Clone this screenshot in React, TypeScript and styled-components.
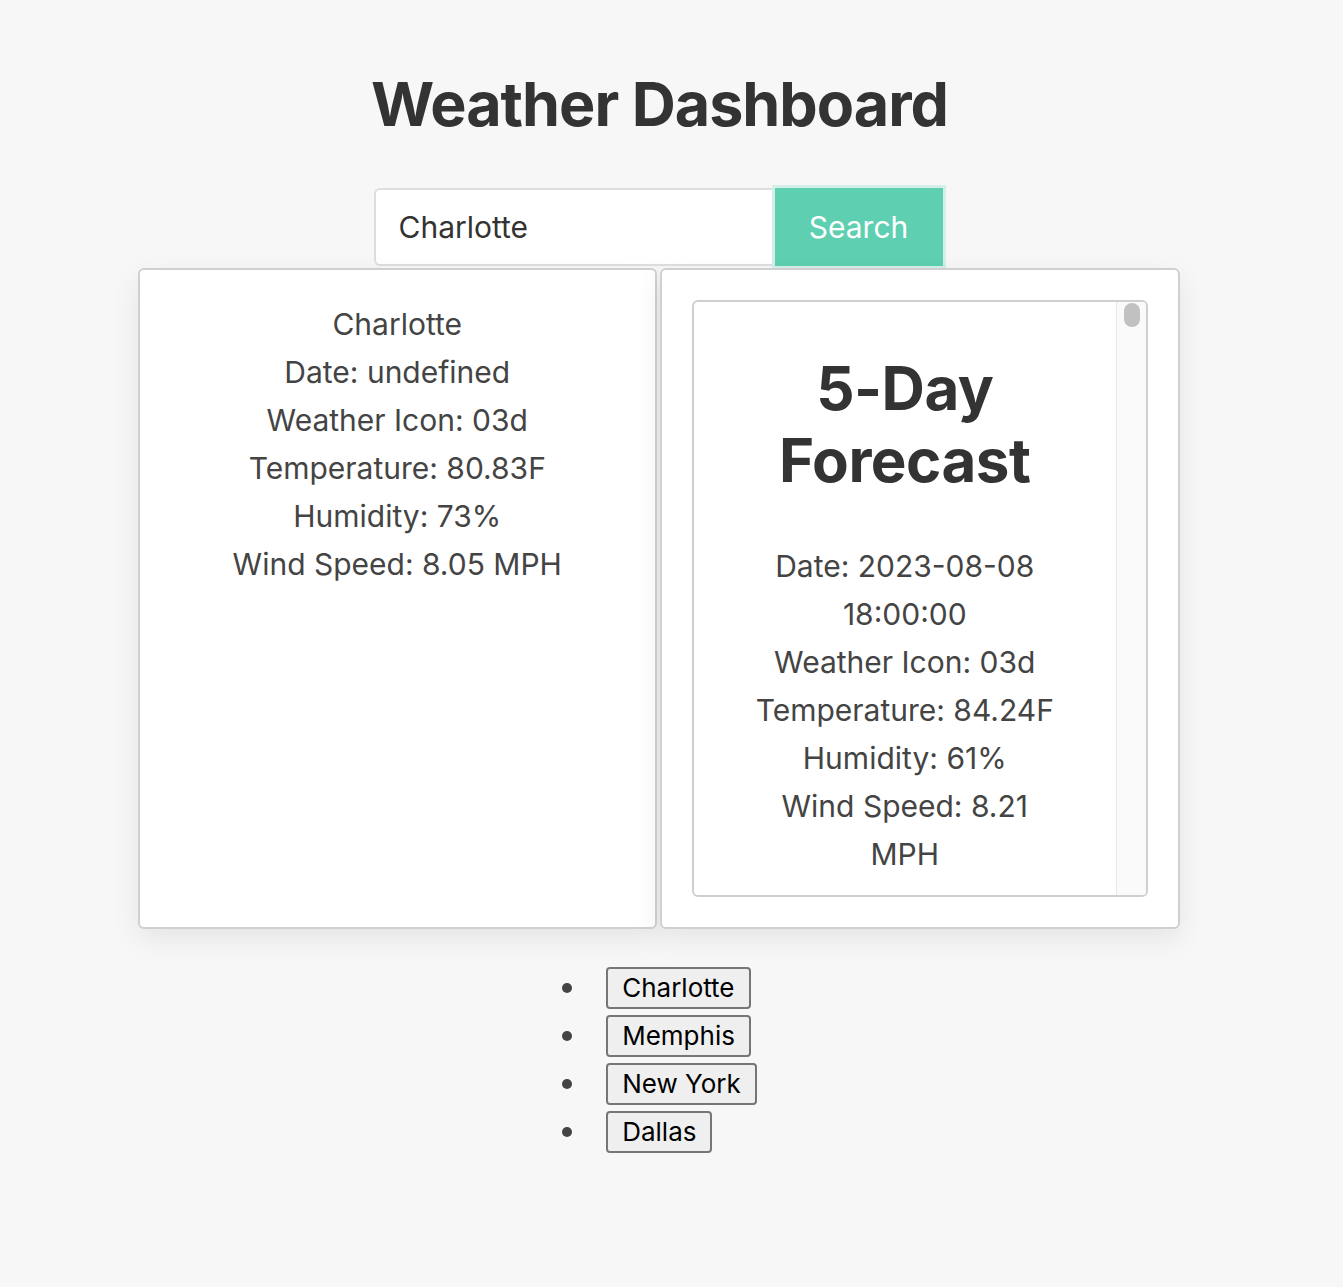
import React from "react";
import styled, { createGlobalStyle } from "styled-components";

const GlobalStyle = createGlobalStyle`
  html, body { margin: 0; padding: 0; background: #f7f7f7; }
  body { font-family: Inter, "Noto Sans", "Liberation Sans", sans-serif; color: #444; }
  * { box-sizing: border-box; }
`;

const Page = styled.div`
  display: flex;
  flex-direction: column;
  align-items: center;
  padding-right: 24px;
  padding-bottom: 80px;
`;

const Title = styled.h1`
  margin: 67px 0 0;
  font-size: 61px;
  line-height: 74px;
  font-weight: 700;
  color: #333;
  letter-spacing: -1px;
`;

const SearchForm = styled.form`
  margin-top: 44px;
  display: flex;
  align-items: center;
  height: 84px;
`;

const SearchInput = styled.input`
  width: 400px;
  height: 78px;
  border: 2px solid #dedede;
  border-radius: 6px 0 0 6px;
  border-right: none;
  background: #fff;
  padding: 0 23px;
  font-family: inherit;
  font-size: 30px;
  color: #333;
  outline: none;
`;

const SearchButton = styled.button`
  width: 174px;
  height: 84px;
  margin-left: -2px;
  border: 3px solid #d3efe7;
  background: #5ecfb1;
  color: #fff;
  font-family: inherit;
  font-size: 30px;
  cursor: pointer;
`;

const CardRow = styled.div`
  margin: -1px 2px 0 0;
  width: 1042px;
  height: 661px;
  display: flex;
  gap: 3px;
`;

const Card = styled.section`
  flex: 1;
  display: flex;
  flex-direction: column;
  background: #fff;
  border: 2px solid #d0d0d0;
  border-radius: 6px;
  padding: 30px;
  box-shadow: 0 10px 28px rgba(0, 0, 0, 0.08);
  min-height: 0;
`;

const Line = styled.p`
  margin: 0;
  font-size: 30px;
  line-height: 48px;
  text-align: center;
  color: #444;
`;

const ForecastBox = styled.div`
  flex: 1;
  min-height: 0;
  display: flex;
  border: 2px solid #cfcfcf;
  border-radius: 6px;
  overflow: hidden;
`;

const ForecastScroll = styled.div`
  flex: 1;
  min-width: 0;
  overflow-y: auto;
  scrollbar-width: none;
  &::-webkit-scrollbar {
    display: none;
  }
`;

const ScrollTrack = styled.div`
  flex: 0 0 30px;
  background: #fafafa;
  border-left: 1px solid #e6e6e6;
  padding: 1px 6px 0 7px;
`;

const ScrollThumb = styled.div`
  height: 24px;
  border-radius: 8px;
  background: #c1c1c1;
`;

const ForecastTitle = styled.h2`
  width: 320px;
  margin: 50px auto 46px;
  font-size: 60px;
  line-height: 72px;
  font-weight: 700;
  text-align: center;
  color: #333;
  letter-spacing: -0.5px;
`;

const ForecastItem = styled.div`
  width: 320px;
  margin: 0 auto 40px;
`;

const CityList = styled.ul`
  margin: 35px auto 0;
  padding: 0;
  list-style: none;
  width: fit-content;
`;

const CityItem = styled.li`
  display: flex;
  align-items: center;
  height: 48px;

  &::before {
    content: "";
    flex: 0 0 10px;
    width: 10px;
    height: 10px;
    margin-right: 34px;
    border-radius: 50%;
    background: #444;
  }
`;

const CityButton = styled.button`
  height: 42px;
  padding: 0 14px;
  border: 2px solid #767676;
  border-radius: 4px;
  background: #efefef;
  color: #000;
  font-family: inherit;
  font-size: 26px;
  line-height: 38px;
`;

const pad = (n: number) => String(n).padStart(2, "0");

const temps = [84.24, 86.1, 83.47, 81.9, 85.02];
const hums = [61, 58, 66, 70, 63];
const winds = [8.21, 7.4, 6.93, 5.8, 9.12];
const icons = ["03d", "04d", "10d", "02d", "01d"];

const forecast = temps.map((temp, i) => {
  const d = new Date(Date.UTC(2023, 7, 8 + i, 18, 0, 0));
  const date = `${d.getUTCFullYear()}-${pad(d.getUTCMonth() + 1)}-${pad(d.getUTCDate())} 18:00:00`;
  return { date, icon: icons[i], temp, hum: hums[i], wind: winds[i] };
});

const cities = ["Charlotte", "Memphis", "New York", "Dallas"];

export default function App() {
  return (
    <>
      <GlobalStyle />
      <Page>
        <Title>Weather Dashboard</Title>
        <SearchForm onSubmit={(e) => e.preventDefault()}>
          <SearchInput defaultValue="Charlotte" />
          <SearchButton type="submit">Search</SearchButton>
        </SearchForm>
        <CardRow>
          <Card>
            <Line>Charlotte</Line>
            <Line>Date: undefined</Line>
            <Line>Weather Icon: 03d</Line>
            <Line>Temperature: 80.83F</Line>
            <Line>Humidity: 73%</Line>
            <Line>Wind Speed: 8.05 MPH</Line>
          </Card>
          <Card>
            <ForecastBox>
              <ForecastScroll>
                <ForecastTitle>5-Day Forecast</ForecastTitle>
                {forecast.map((f) => (
                  <ForecastItem key={f.date}>
                    <Line>Date: {f.date}</Line>
                    <Line>Weather Icon: {f.icon}</Line>
                    <Line>Temperature: {f.temp}F</Line>
                    <Line>Humidity: {f.hum}%</Line>
                    <Line>Wind Speed: {f.wind} MPH</Line>
                  </ForecastItem>
                ))}
              </ForecastScroll>
              <ScrollTrack>
                <ScrollThumb />
              </ScrollTrack>
            </ForecastBox>
          </Card>
        </CardRow>
        <CityList>
          {cities.map((c) => (
            <CityItem key={c}>
              <CityButton type="button">{c}</CityButton>
            </CityItem>
          ))}
        </CityList>
      </Page>
    </>
  );
}
